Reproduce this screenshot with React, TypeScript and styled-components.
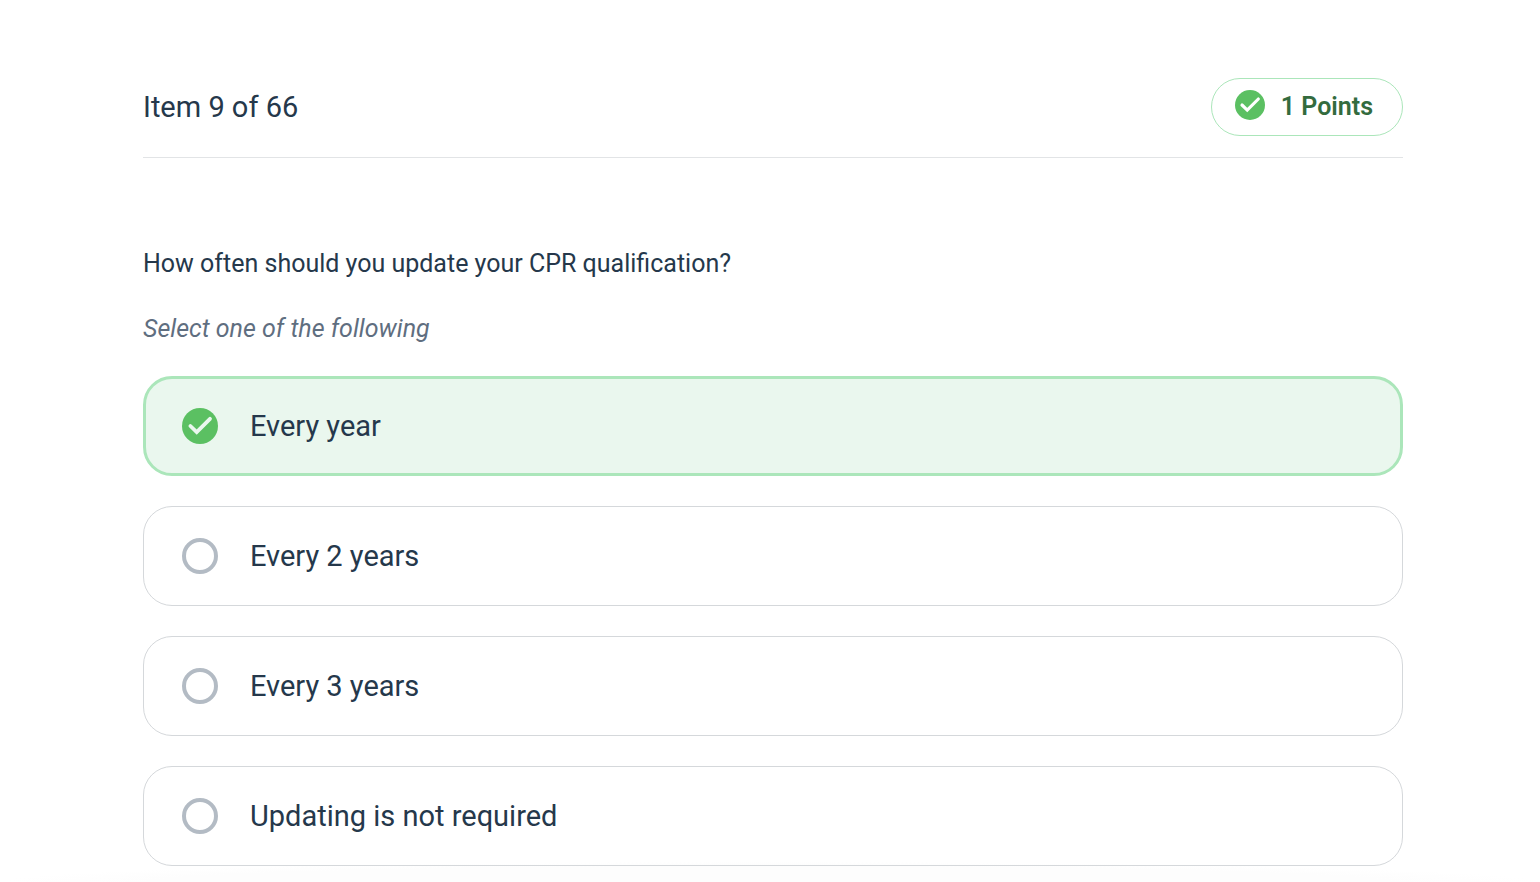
import React, { useState } from "react";
import styled, { createGlobalStyle } from "styled-components";

const GlobalStyle = createGlobalStyle`
  *, *::before, *::after { box-sizing: border-box; }
  body {
    margin: 0;
    background: #fff;
    color: #25384b;
    font-family: Roboto, "Liberation Sans", sans-serif;
  }
`;

const Page = styled.main`
  min-height: 100vh;
  padding: 78px 137px 16px 143px;
  background: radial-gradient(ellipse 50% 20px at 50% 100%, #fdfdfd 80%, #fff 100%);
`;

const Header = styled.header`
  display: flex;
  align-items: center;
  justify-content: space-between;
  padding-bottom: 21px;
  border-bottom: 1px solid #e2e4e6;
`;

const Title = styled.h1`
  margin: 0;
  font-size: 29px;
  line-height: 36px;
  font-weight: 400;
`;

const Points = styled.div`
  display: flex;
  gap: 16px;
  height: 58px;
  padding: 11px 29px 0 23px;
  border: 1px solid #abe6ba;
  border-radius: 29px;
  color: #336b3e;
  font-size: 25px;
  line-height: 34px;
  font-weight: 600;
`;

const Question = styled.h2`
  margin: 90px 0 0;
  font-size: 25px;
  line-height: 32px;
  font-weight: 400;
`;

const Choices = styled.fieldset`
  display: grid;
  gap: 30px;
  min-width: 0;
  margin: 33px 0 0;
  padding: 0;
  border: 0;
`;

const Hint = styled.legend`
  margin-bottom: 31px;
  padding: 0;
  color: #5f6e80;
  font-size: 25px;
  line-height: 32px;
  font-style: italic;
`;

const Choice = styled.label<{ $selected: boolean }>`
  display: flex;
  align-items: center;
  gap: 32px;
  height: 100px;
  padding: 0 ${(p) => (p.$selected ? 36 : 38)}px;
  border: ${(p) => (p.$selected ? "3px solid #abe6ba" : "1px solid #d5d8db")};
  border-radius: 29px;
  background: ${(p) => (p.$selected ? "#eaf7ee" : "transparent")};
  font-size: 29px;
  line-height: 36px;
  cursor: pointer;
`;

const RadioSlot = styled.span`
  display: grid;
  flex: none;

  > * { grid-area: 1 / 1; }
  > svg { pointer-events: none; }
`;

const Radio = styled.input`
  appearance: none;
  width: 36px;
  height: 36px;
  margin: 0;
  border: 4px solid #b3bbc4;
  border-radius: 50%;
  cursor: pointer;

  &:checked { border-color: transparent; }
`;

function CheckBadge({ size, tick }: { size: number; tick: string }) {
  return (
    <svg width={size} height={size} viewBox="0 0 36 36" aria-hidden="true">
      <circle cx="18" cy="18" r="18" fill="#5bc062" />
      <path
        d="M8.4 18 L14.7 24.1 L28 10.8"
        fill="none"
        stroke={tick}
        strokeWidth="3.8"
        strokeLinecap="round"
        strokeLinejoin="miter"
      />
    </svg>
  );
}

const options = ["Every year", "Every 2 years", "Every 3 years", "Updating is not required"];

export default function App() {
  const [selected, setSelected] = useState(0);

  return (
    <>
      <GlobalStyle />
      <Page>
        <Header>
          <Title>Item 9 of 66</Title>
          <Points>
            <CheckBadge size={30} tick="#fff" />
            <span>1 Points</span>
          </Points>
        </Header>
        <Question>How often should you update your CPR qualification?</Question>
        <Choices>
          <Hint>Select one of the following</Hint>
          {options.map((text, i) => (
            <Choice key={text} $selected={i === selected}>
              <RadioSlot>
                <Radio
                  type="radio"
                  name="answer"
                  checked={i === selected}
                  onChange={() => setSelected(i)}
                />
                {i === selected && <CheckBadge size={36} tick="#eaf7ee" />}
              </RadioSlot>
              <span>{text}</span>
            </Choice>
          ))}
        </Choices>
      </Page>
    </>
  );
}
